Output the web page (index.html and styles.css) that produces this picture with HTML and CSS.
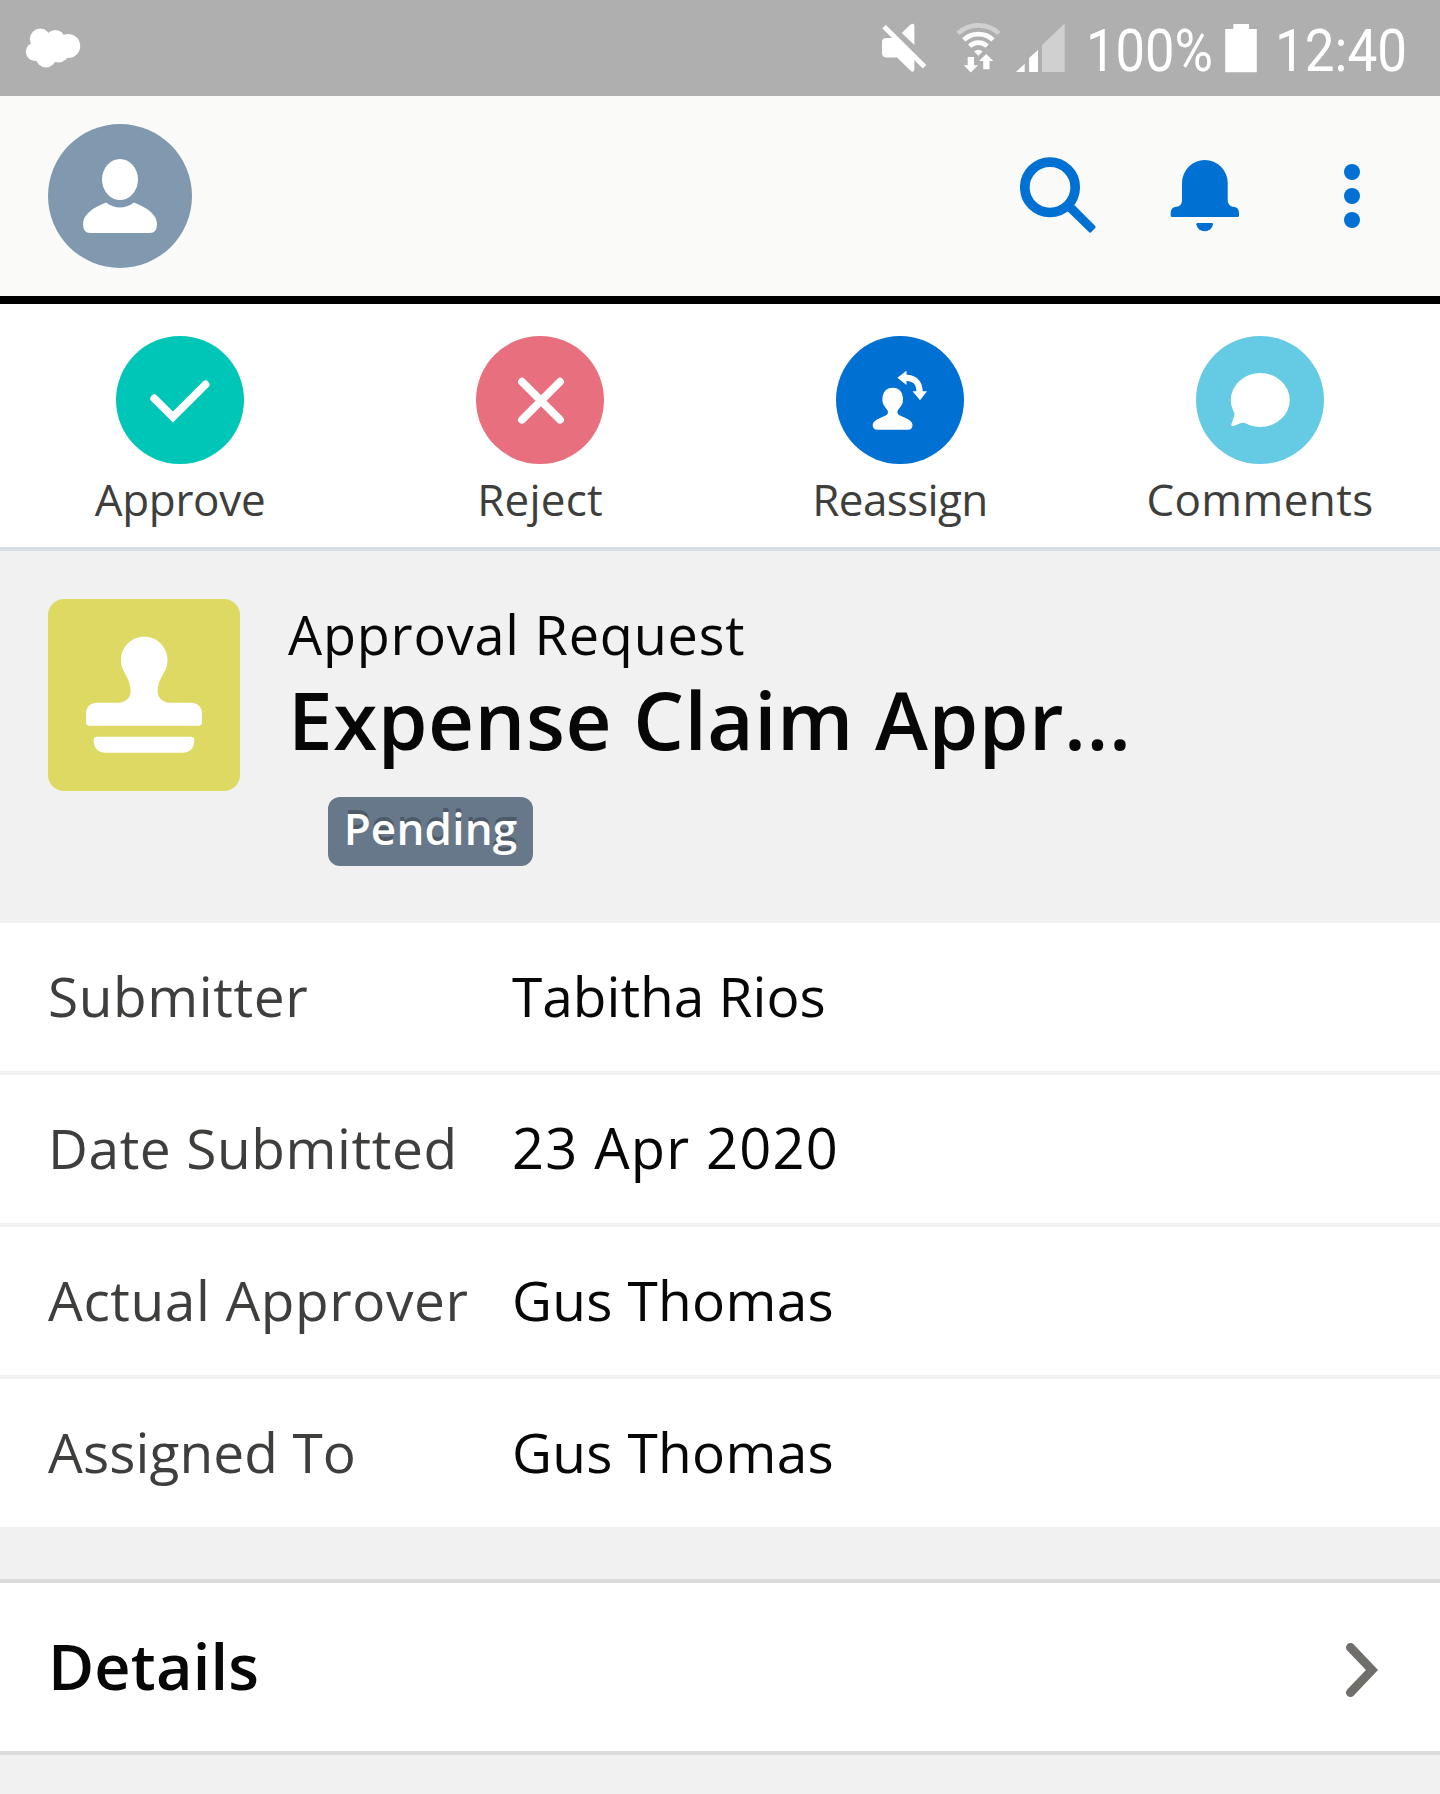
FILE: index.html
```html
<!DOCTYPE html>
<html lang="en">
<head>
    <meta charset="UTF-8">
    <meta name="viewport" content="width=device-width, initial-scale=1.0">
    <title>Approval Request</title>
    <link rel="stylesheet" href="styles.css">
</head>
<body>
<div class="status-bar">
    <svg class="cloud" width="56" height="96" viewBox="25 0 56 96" fill="#fff">
        <circle cx="40.2" cy="39" r="10.4"/>
        <circle cx="55.3" cy="39.8" r="9.8"/>
        <circle cx="68.2" cy="46" r="12"/>
        <circle cx="35" cy="51.8" r="9.2"/>
        <circle cx="46" cy="57" r="10.4"/>
        <circle cx="58.7" cy="52" r="10.4"/>
        <path d="M34 44L48 33L66 38L64 56L50 61L36 58Z"/>
    </svg>
    <svg class="mute" width="45" height="96" viewBox="881 0 45 96" fill="#fff">
        <path d="M882 42Q882 38 886 38H895L914.4 58V69Q914 73 911 71L897 57.5H886Q882 57 882 53Z"/>
        <path d="M901.8 33L910 25Q914.4 22 914.4 26V45Z"/>
        <path d="M882.2 28.3L885.9 25L926.3 65L922.8 68.4Z"/>
    </svg>
    <svg class="wifi" width="45" height="96" viewBox="956 0 45 96" fill="none" stroke="#fff" stroke-width="4.7">
        <path stroke="#d0d0d0" d="M957.8 33.4A30.2 30.2 0 0 1 999 33.4"/>
        <path d="M963.8 39.9A21.4 21.4 0 0 1 993 39.9"/>
        <path d="M969.7 46.1A12.8 12.8 0 0 1 987.1 46.1"/>
        <path stroke="none" fill="#fff" d="M978.4 55.7L974.2 51.4A6 6 0 0 1 982.6 51.4Z"/>
        <path stroke="none" fill="#fff" d="M967.7 57H974V65.3H978L970.8 72.5L963.8 65.3H967.7Z"/>
        <path stroke="none" fill="#fff" d="M983.2 69.2H989.5V61H993.4L986.2 54L979 61H983.2Z"/>
    </svg>
    <svg class="signal" width="49" height="96" viewBox="1016 0 49 96" fill="#fff">
        <path d="M1016 72L1024.7 63.7V72Z"/>
        <path d="M1029.1 72V58L1038 50V72Z"/>
        <path fill="#d0d0d0" d="M1042 72V45L1064.6 23.5V72Z"/>
    </svg>
    <svg class="status-text" width="126" height="96">
        <text x="0" y="71" textLength="127" lengthAdjust="spacingAndGlyphs">100%</text>
    </svg>
    <svg class="battery" width="32" height="96" viewBox="1225 0 32 96" fill="#fff">
        <path d="M1225.2 72.3V29H1233.3V24H1249V29H1256.8V72.3Z"/>
    </svg>
    <svg class="status-text clock" width="132" height="96">
        <text x="-1" y="71" textLength="132" lengthAdjust="spacingAndGlyphs">12:40</text>
    </svg>
</div>

<div class="navbar">
    <svg class="avatar" width="144" height="144" viewBox="0 0 144 144">
        <circle cx="72" cy="72" r="72" fill="#8199af"/>
        <ellipse cx="72" cy="55.5" rx="18" ry="20.5" fill="#fff"/>
        <path fill="#fff" d="M58 78.5Q72 88.5 86 78.5C100 84 109 91 109 100Q109 109 102 109H42Q35 109 35 100C35 91 44 84 58 78.5Z"/>
    </svg>
    <svg class="search" width="77" height="78" viewBox="0 0 77 78">
        <circle cx="30" cy="30.3" r="25.2" fill="none" stroke="#0070d2" stroke-width="9.7"/>
        <path fill="#0070d2" d="M54.3 48L75.2 69Q76.2 70 75.2 71L71.3 75Q70.3 76.3 69.2 75.2L47.3 54Z"/>
    </svg>
    <svg class="bell" width="70" height="72" viewBox="0 0 70 72" fill="#0070d2">
        <path d="M12 23A22.85 23 0 0 1 57.7 23V41Q58.5 46.3 63 46.7Q69 47 69 53V55.5Q69 57 67.5 57H2.2Q.7 57 .7 55.5V53Q.7 47 6.5 46.7Q11.5 46.3 12 41Z"/>
        <path d="M27.5 63H42Q43 63 43 64.2A8.4 7.8 0 0 1 26.3 64.2Q26.3 63 27.5 63Z"/>
    </svg>
    <svg class="more" width="16" height="64" viewBox="0 0 16 64" fill="#0070d2">
        <circle cx="8" cy="8" r="8"/>
        <circle cx="8" cy="32" r="8"/>
        <circle cx="8" cy="56" r="8"/>
    </svg>
</div>

<div class="actions">
    <div class="action">
        <svg width="128" height="128" viewBox="0 0 128 128">
            <circle cx="64" cy="64" r="64" fill="#00c6b7"/>
            <path d="M38.3 62.4L56.9 81L89.5 48.4" fill="none" stroke="#fff" stroke-width="7.8" stroke-linecap="round"/>
        </svg>
        <span class="action-label approve">Approve</span>
    </div>
    <div class="action">
        <svg width="128" height="128" viewBox="0 0 128 128">
            <circle cx="64" cy="64" r="64" fill="#e86f7d"/>
            <path d="M46 45.7L84 83.7M84 45.7L46 83.7" fill="none" stroke="#fff" stroke-width="7.8" stroke-linecap="round"/>
        </svg>
        <span class="action-label reject">Reject</span>
    </div>
    <div class="action">
        <svg width="128" height="128" viewBox="0 0 128 128">
            <circle cx="64" cy="64" r="64" fill="#0070d2"/>
            <path fill="#fff" d="M56.7 51.7C63 51.7 67 56 67 63.5C67 69 64 71 61.5 75Q60.8 78 64 79.5C70 82 76.5 84.5 76.5 89Q76.5 93.7 72 93.7H41.5Q36.7 93.7 36.7 89C36.7 84.5 44 82 49.5 79.5Q52.6 78 51.8 75C49.5 71 46.4 69 46.4 63.5C46.4 56 50.5 51.7 56.7 51.7Z"/>
            <path fill="#fff" d="M61.4 41.7L70.5 34.7V38.7C80 38.7 86.7 45 86.7 55.3H91L84 64.3L76.5 55.3H80.4C80.4 48.5 77 45 70.5 45V49Z"/>
        </svg>
        <span class="action-label reassign">Reassign</span>
    </div>
    <div class="action">
        <svg width="128" height="128" viewBox="0 0 128 128">
            <circle cx="64" cy="64" r="64" fill="#65cae4"/>
            <ellipse cx="64.3" cy="64" rx="29.5" ry="27" fill="#fff"/>
            <path fill="#fff" d="M38 76Q38.8 78 38.3 79.5L35.3 88.5Q35.2 90.8 37.5 90L45 87Q47.4 86.3 50 87.3L60 80L45 70Z"/>
        </svg>
        <span class="action-label comments">Comments</span>
    </div>
</div>

<div class="record-header">
    <svg class="record-icon" width="192" height="192" viewBox="0 0 192 192" fill="#fff">
        <path d="M96.3 37.7C109.5 37.7 119.5 48 119.5 61C119.5 66 118 70.5 115.5 74.5Q109.5 84 109.5 93Q110.5 102 120 103.7H143Q154 104.5 154 115V123Q154 126.7 150.5 126.7H41.5Q38 126.7 38 123V115Q38 104.5 49 103.7H72Q81.8 102 82.7 93Q82.7 84 77 74.5C74.5 70.5 73 66 73 61C73 48 83 37.7 96.3 37.7Z"/>
        <path d="M49 137.7H143Q146.3 137.7 146.3 141Q146 153.7 134 153.7H58Q46 153.7 45.6 141Q45.6 137.7 49 137.7Z"/>
    </svg>
    <div class="record-text">
        <div class="record-type">Approval Request</div>
        <div class="record-title">Expense Claim Appr...</div>
        <div class="badge">Pending</div>
    </div>
</div>

<div class="fields">
    <div class="field">
        <div class="label">Submitter</div>
        <div class="value name">Tabitha Rios</div>
    </div>
    <div class="field">
        <div class="label">Date Submitted</div>
        <div class="value date">23 Apr 2020</div>
    </div>
    <div class="field">
        <div class="label">Actual Approver</div>
        <div class="value">Gus Thomas</div>
    </div>
    <div class="field">
        <div class="label assigned">Assigned To</div>
        <div class="value">Gus Thomas</div>
    </div>
</div>

<div class="details">
    <div class="details-title">Details</div>
    <svg width="36" height="62" viewBox="0 0 36 62">
        <path d="M8.4 11.4L30 34L8.4 56.6" fill="none" stroke="#706e6b" stroke-width="8.8" stroke-linecap="round"/>
    </svg>
</div>
</body>
</html>
```
FILE: styles.css
```css
* {
    box-sizing: border-box;
}
body {
    margin: 0;
    background-color: #f1f1f1;
    font-family: "Open Sans", sans-serif;
    color: #080707;
}
svg {
    display: block;
    flex: none;
}
.status-bar {
    display: flex;
    height: 96px;
    padding: 0 32px 0 25px;
    background-color: #afafaf;
}
.mute {
    margin-left: auto;
    overflow: visible;
}
.wifi {
    margin-left: 30px;
}
.signal {
    margin-left: 15px;
}
.status-text {
    margin-left: 21px;
    overflow: visible;
    font-family: Roboto, sans-serif;
    font-size: 60px;
    fill: #fff;
}
.battery {
    margin-left: 13px;
}
.clock {
    margin-left: 19px;
}
.navbar {
    display: flex;
    align-items: center;
    height: 208px;
    padding: 0 80px 0 48px;
    background-color: #fafaf9;
    border-bottom: 8px solid #000;
}
.search {
    margin-left: auto;
}
.bell {
    margin-left: 73px;
}
.more {
    margin-left: 104px;
}
.actions {
    display: grid;
    grid-template-columns: repeat(4, 360px);
    height: 247px;
    padding-top: 32px;
    background-color: #fff;
    border-bottom: 4px solid #d8dde6;
}
.action {
    display: flex;
    flex-direction: column;
    align-items: center;
    gap: 13px;
}
.action-label {
    font-size: 44px;
    line-height: 44px;
    color: #3e3e3c;
}
.approve {
    letter-spacing: -0.3px;
}
.reject {
    letter-spacing: 0.2px;
}
.reassign {
    letter-spacing: -0.6px;
}
.comments {
    letter-spacing: 0.4px;
}
.record-header {
    display: flex;
    gap: 48px;
    height: 372px;
    padding: 48px 48px 0;
}
.record-icon {
    background-color: #ddd962;
    border-radius: 16px;
}
.record-text {
    padding-top: 3px;
}
.record-type {
    font-size: 54px;
    line-height: 64px;
    letter-spacing: 0.8px;
}
.record-title {
    margin-top: 5px;
    font-size: 80px;
    font-weight: 600;
    line-height: 96px;
    letter-spacing: 0.5px;
    white-space: nowrap;
}
.badge {
    width: 205px;
    height: 69px;
    margin: 30px 0 0 40px;
    padding-bottom: 7px;
    font-size: 44px;
    font-weight: 600;
    line-height: 62px;
    letter-spacing: 0.2px;
    text-align: center;
    color: #fff;
    text-shadow: 0 -4px 0 rgba(0, 0, 0, 0.25);
    background-color: #67788a;
    border-radius: 12px;
}
.fields {
    background-color: #fff;
}
.field {
    display: grid;
    grid-template-columns: 464px 1fr;
    height: 152px;
    padding: 0 48px;
    font-size: 55px;
    line-height: 145px;
    white-space: nowrap;
    border-bottom: 4px solid #f1f1f1;
}
.field:last-child {
    height: 148px;
    border-bottom: none;
}
.label {
    color: #3e3e3c;
    letter-spacing: 0.6px;
}
.assigned {
    letter-spacing: 0.1px;
}
.value {
    letter-spacing: 0.3px;
}
.name {
    letter-spacing: 0;
}
.date {
    font-size: 56px;
    letter-spacing: 1.2px;
}
.details {
    display: flex;
    align-items: center;
    justify-content: space-between;
    height: 176px;
    margin-top: 52px;
    padding: 0 62px 0 48px;
    background-color: #fff;
    border-top: 4px solid #dddbda;
    border-bottom: 4px solid #dddbda;
}
.details-title {
    padding-bottom: 2px;
    font-size: 63px;
    font-weight: 600;
    line-height: 80px;
    letter-spacing: 0.2px;
}
```
